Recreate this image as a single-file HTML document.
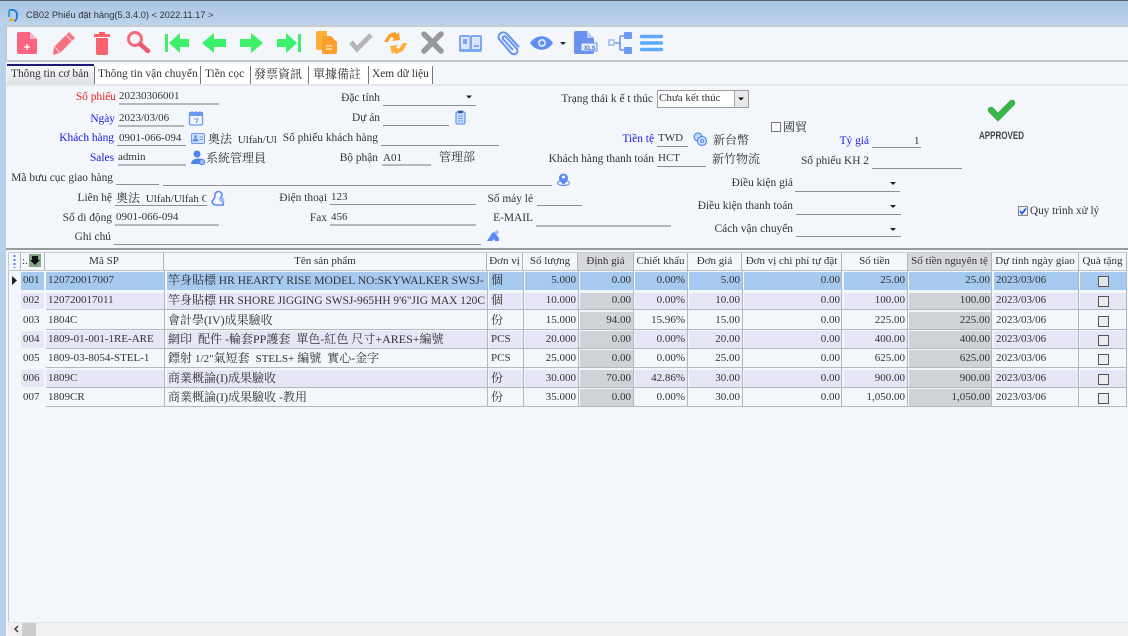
<!DOCTYPE html>
<html lang="vi"><head><meta charset="utf-8"><title>CB02 Phiếu đặt hàng</title>
<style>
*{box-sizing:border-box}
html,body{margin:0;padding:0;width:1128px;height:636px;overflow:hidden;background:#f3f6fb}
body{position:relative;font:11px "Liberation Serif","Noto Serif CJK SC",serif;color:#333}
#w{position:absolute;left:0;top:0;width:1128px;height:636px;overflow:hidden;filter:blur(.3px)}
#w div,#w span.a{position:absolute;white-space:nowrap}
.l{line-height:14px;height:14px;text-align:right;font-size:11.4px}
.t{line-height:14px;height:14px}
.f{height:1px;background:#8b9096}
.g{height:2px;background:#b4b8bc}
.c{font-size:12px}
.blue{color:#1a1ae6}
.row{left:21px;width:1106px;display:grid;grid-template-columns:25px 119px 322px 36px 55px 55px 54px 55px 100px 65px 85px 86px 49px}
#w .row>span{display:block;position:static;overflow:hidden;padding:0 2px;border-left:2px solid #f3f6fb;border-right:1px solid transparent;white-space:nowrap}
#w .row>span.n{text-align:right;padding:0 1px}
#w .row>span.i{border:0;border-right:2px solid #f3f6fb}
#w .row>span:nth-child(2){border-left:0;padding-left:2px}
#w .row>span:nth-child(3){padding-left:1px}
#w .row>span span{display:inline;border:0;padding:0}
.lv>span{background:#e6e6f7}
.bl>span{background:#a6c9ef!important}
.wh>span{background:#f3f6fb}
#w .row>span.y{background:#cfd2d6}
.lv>span.y{background:#cfd2d6!important}
#w .row>span.x{position:relative}
.x i{position:absolute;left:18px;top:4px;width:11px;height:11px;border:1px solid #555;background:#ececec;display:block}
.bl .x i{background:#e2e6ea}
.h{top:253px;height:17px;line-height:16px;text-align:center;border-right:1px solid #b0b4b8;color:#333}
.line{left:46px;width:1081px;height:1px;background:#b4b8bc}
.v{top:271px;width:1px;height:136px;background:#b4b8bc}
.tab{top:66px;height:18px;line-height:17px;font-size:11.4px}
.sep{top:66px;width:1px;height:18px;background:#777}
</style></head><body><div id="w">
<div style="left:0;top:0;width:1128px;height:1px;background:#59616c"></div>
<div style="left:0;top:1px;width:1128px;height:24px;background:linear-gradient(#a9c5e4,#bcd3ec)"></div>
<div style="left:0;top:25px;width:6px;height:611px;background:#b9d1ea"></div>
<div style="left:6px;top:25px;width:1122px;height:2px;background:#c9ccd0"></div>
<div style="left:6px;top:27px;width:1122px;height:33px;background:#f3f6fb"></div>
<div style="left:6px;top:60px;width:1122px;height:2px;background:#c3c6ca"></div>
<div style="left:6px;top:25px;width:1px;height:37px;background:#c3c6ca"></div>
<div style="left:6px;top:84px;width:1122px;height:2px;background:#e4e6e9"></div>
<div class="t" style="left:26px;top:8px;font:9.3px/14px 'Liberation Sans',sans-serif;color:#333">CB02 Phiếu đặt hàng(5.3.4.0) &lt; 2022.11.17 &gt;</div>

<div style="left:7px;top:64px;width:87px;height:20px;background:linear-gradient(#f7f8fa,#dfe1e4);border-top:2px solid #1c1c78"></div>
<div style="left:94px;top:64px;width:339px;height:20px;background:#fff"></div>
<div class="tab" style="left:11px">Thông tin cơ bản</div>
<div class="sep" style="left:94px"></div>
<div class="tab" style="left:98px">Thông tin vận chuyển</div>
<div class="sep" style="left:200px"></div>
<div class="tab" style="left:205px">Tiền cọc</div>
<div class="sep" style="left:250px"></div>
<div class="tab c" style="left:254px;font-size:12px">發票資訊</div>
<div class="sep" style="left:308px"></div>
<div class="tab c" style="left:313px;font-size:12px">單據備註</div>
<div class="sep" style="left:368px"></div>
<div class="tab" style="left:372px">Xem dữ liệu</div>
<div class="sep" style="left:432px"></div>

<div class="l" style="right:1012px;top:90px;color:#f02020">Số phiếu</div>
<div class="t" style="left:119px;top:89px">20230306001</div><div class="g" style="left:119px;top:103px;width:100px"></div>
<div class="l blue" style="right:1013px;top:112px">Ngày</div>
<div class="t" style="left:119px;top:111px">2023/03/06</div><div class="g" style="left:118px;top:125px;width:66px"></div>
<div class="l blue" style="right:1014px;top:131px">Khách hàng</div>
<div class="t" style="left:119px;top:131px">0901-066-094</div><div class="f" style="left:117px;top:145px;width:69px"></div>
<div class="t c" style="left:208px;top:132px;width:69px;overflow:hidden">奧法 <span style="font-size:11px">&nbsp;Ulfah/Ul</span></div>
<div class="l" style="right:750px;top:131px">Số phiếu khách hàng</div><div class="f" style="left:381px;top:145px;width:118px"></div>
<div class="l blue" style="right:1014px;top:151px">Sales</div>
<div class="t" style="left:118px;top:150px">admin</div><div class="g" style="left:118px;top:164px;width:68px"></div>
<div class="t c" style="left:206px;top:151px">系統管理員</div>
<div class="l" style="right:750px;top:151px">Bộ phận</div>
<div class="t" style="left:383px;top:151px">A01</div><div class="g" style="left:382px;top:164px;width:49px"></div>
<div class="t c" style="left:439px;top:150px">管理部</div>
<div class="l" style="right:1015px;top:171px">Mã bưu cục giao hàng</div><div class="f" style="left:116px;top:184px;width:43px"></div><div class="f" style="left:163px;top:185px;width:389px"></div>
<div class="l" style="right:1016px;top:191px">Liên hệ</div>
<div class="t c" style="left:116px;top:191px;width:91px;overflow:hidden">奧法 <span style="font-size:11px">&nbsp;Ulfah/Ulfah C</span></div><div class="f" style="left:115px;top:205px;width:92px"></div>
<div class="l" style="right:801px;top:191px">Điện thoại</div>
<div class="t" style="left:331px;top:190px">123</div><div class="f" style="left:330px;top:204px;width:146px"></div>
<div class="l" style="right:595px;top:192px">Số máy lẻ</div><div class="f" style="left:537px;top:205px;width:45px"></div>
<div class="l" style="right:1016px;top:211px">Số di động</div>
<div class="t" style="left:116px;top:210px">0901-066-094</div><div class="g" style="left:115px;top:224px;width:104px"></div>
<div class="l" style="right:801px;top:211px">Fax</div>
<div class="t" style="left:331px;top:210px">456</div><div class="g" style="left:330px;top:224px;width:146px"></div>
<div class="l" style="right:595px;top:211px">E-MAIL</div><div class="g" style="left:536px;top:225px;width:135px"></div>
<div class="l" style="right:1017px;top:230px">Ghi chú</div><div class="f" style="left:114px;top:244px;width:367px"></div>
<div class="l" style="right:748px;top:91px">Đặc tính</div><div class="f" style="left:383px;top:105px;width:93px"></div>
<div class="l" style="right:748px;top:111px">Dự án</div><div class="f" style="left:383px;top:125px;width:66px"></div>
<div class="l" style="right:475px;top:92px">Trạng thái k ế t thúc</div>
<div style="left:657px;top:90px;width:92px;height:18px;background:#fff;border:1px solid #9a9da0"></div>
<div class="t" style="left:659px;top:91px">Chưa kết thúc</div>
<div style="left:734px;top:91px;width:14px;height:16px;background:#e8e8e8;border-left:1px solid #aaa"></div>
<div class="l blue" style="right:474px;top:132px">Tiền tệ</div>
<div class="t" style="left:658px;top:131px">TWD</div><div class="f" style="left:657px;top:146px;width:31px"></div>
<div class="t c" style="left:713px;top:133px">新台幣</div>
<div class="l" style="right:474px;top:152px">Khách hàng thanh toán</div>
<div class="t" style="left:658px;top:151px">HCT</div><div class="f" style="left:657px;top:166px;width:49px"></div>
<div class="t c" style="left:712px;top:152px">新竹物流</div>
<div style="left:771px;top:122px;width:10px;height:10px;border:1px solid #777;background:#fff"></div>
<div class="t c" style="left:783px;top:120px">國貿</div>
<div class="l blue" style="right:259px;top:134px">Tỷ giá</div>
<div class="t" style="left:914px;top:134px">1</div><div class="f" style="left:872px;top:147px;width:49px"></div>
<div class="l" style="right:259px;top:154px">Số phiếu KH 2</div><div class="f" style="left:872px;top:168px;width:90px"></div>
<div class="l" style="right:335px;top:176px">Điều kiện giá</div><div class="f" style="left:795px;top:191px;width:105px"></div>
<div class="l" style="right:335px;top:199px">Điều kiện thanh toán</div><div class="f" style="left:796px;top:214px;width:105px"></div>
<div class="l" style="right:335px;top:222px">Cách vận chuyển</div><div class="f" style="left:796px;top:236px;width:105px"></div>
<div class="t" style="left:979px;top:129px;font:bold 11px/14px 'Liberation Sans',sans-serif;color:#444;transform:scaleX(.73);transform-origin:0 0">APPROVED</div>
<div style="left:1018px;top:206px;width:10px;height:10px;border:1px solid #888;background:#e8edf5"></div>
<div class="t" style="left:1030px;top:204px;font-size:11.2px">Quy trình xử lý</div>

<div style="left:6px;top:248px;width:1122px;height:2px;background:#999c9f"></div>
<div style="left:8px;top:252px;width:1px;height:371px;background:#c4c8cc"></div>
<div style="left:9px;top:270px;width:1118px;height:1px;background:#c0c4c8"></div>
<div style="left:9px;top:252px;width:1118px;height:1px;background:#c8ccd0"></div>
<div class="h" style="left:9px;width:12px"></div>
<div class="h" style="left:21px;width:24px;text-align:left;padding-left:1px">:.</div>
<div style="left:29px;top:254px;width:12px;height:13px;background:#86a886"></div>
<div class="h" style="left:45px;width:119px">Mã SP</div>
<div class="h" style="left:164px;width:323px">Tên sản phẩm</div>
<div class="h" style="left:487px;width:36px">Đơn vị</div>
<div class="h" style="left:523px;width:55px">Số lượng</div>
<div class="h" style="left:578px;width:56px;background:#d6d8db">Định giá</div>
<div class="h" style="left:634px;width:54px">Chiết khấu</div>
<div class="h" style="left:688px;width:54px">Đơn giá</div>
<div class="h" style="left:742px;width:100px">Đơn vị chi phí tự đặt</div>
<div class="h" style="left:842px;width:66px">Số tiền</div>
<div class="h" style="left:908px;width:84px;background:#d6d8db">Số tiền nguyên tệ</div>
<div class="h" style="left:992px;width:87px">Dự tính ngày giao</div>
<div class="h" style="left:1079px;width:48px">Quà tặng</div>

<div class="row bl" style="top:272px;height:18px;line-height:17px">
<span class="i">001</span><span>120720017007</span><span><span class="c">竿身貼標</span> <span style="font-size:11.55px">HR HEARTY RISE MODEL NO:SKYWALKER SWSJ-</span></span><span class="c">個</span><span class="n">5.000</span><span class="n">0.00</span><span class="n">0.00%</span><span class="n">5.00</span><span class="n">0.00</span><span class="n">25.00</span><span class="n">25.00</span><span>2023/03/06</span><span class="x"><i></i></span></div>
<div class="row lv" style="top:293px;height:16px;line-height:14px">
<span class="i">002</span><span>120720017011</span><span><span class="c">竿身貼標</span> <span style="font-size:11.4px">HR SHORE JIGGING SWSJ-965HH 9'6"JIG MAX 120C</span></span><span class="c">個</span><span class="n">10.000</span><span class="n y">0.00</span><span class="n">0.00%</span><span class="n">10.00</span><span class="n">0.00</span><span class="n">100.00</span><span class="n y">100.00</span><span>2023/03/06</span><span class="x"><i style="top:3px"></i></span></div>
<div class="row wh" style="top:312px;height:17px;line-height:16px">
<span class="i">003</span><span>1804C</span><span class="c">會計學(IV)成果驗收</span><span class="c">份</span><span class="n">15.000</span><span class="n y">94.00</span><span class="n">15.96%</span><span class="n">15.00</span><span class="n">0.00</span><span class="n">225.00</span><span class="n y">225.00</span><span>2023/03/06</span><span class="x"><i></i></span></div>
<div class="row lv" style="top:331px;height:17px;line-height:16px">
<span class="i">004</span><span>1809-01-001-1RE-ARE</span><span class="c">網印&nbsp; 配件 -輪套PP護套&nbsp; 單色-紅色 尺寸+ARES+編號</span><span>PCS</span><span class="n">20.000</span><span class="n y">0.00</span><span class="n">0.00%</span><span class="n">20.00</span><span class="n">0.00</span><span class="n">400.00</span><span class="n y">400.00</span><span>2023/03/06</span><span class="x"><i></i></span></div>
<div class="row wh" style="top:350px;height:17px;line-height:17px">
<span class="i">005</span><span>1809-03-8054-STEL-1</span><span class="c">鏢射 <span style="font-size:11px">1/2"</span>氣短套&nbsp; <span style="font-size:11px">STELS+</span> 編號&nbsp; 實心-金字</span><span>PCS</span><span class="n">25.000</span><span class="n y">0.00</span><span class="n">0.00%</span><span class="n">25.00</span><span class="n">0.00</span><span class="n">625.00</span><span class="n y">625.00</span><span>2023/03/06</span><span class="x"><i></i></span></div>
<div class="row lv" style="top:370px;height:17px;line-height:16px">
<span class="i">006</span><span>1809C</span><span class="c">商業概論(I)成果驗收</span><span class="c">份</span><span class="n">30.000</span><span class="n y">70.00</span><span class="n">42.86%</span><span class="n">30.00</span><span class="n">0.00</span><span class="n">900.00</span><span class="n y">900.00</span><span>2023/03/06</span><span class="x"><i></i></span></div>
<div class="row wh" style="top:389px;height:17px;line-height:17px">
<span class="i">007</span><span>1809CR</span><span class="c">商業概論(I)成果驗收 -教用</span><span class="c">份</span><span class="n">35.000</span><span class="n y">0.00</span><span class="n">0.00%</span><span class="n">30.00</span><span class="n">0.00</span><span class="n">1,050.00</span><span class="n y">1,050.00</span><span>2023/03/06</span><span class="x"><i></i></span></div>
<div class="line" style="top:309px"></div><div class="line" style="top:329px"></div><div class="line" style="top:348px"></div><div class="line" style="top:367px"></div><div class="line" style="top:387px"></div><div class="line" style="top:406px"></div>
<div class="v" style="left:164px"></div><div class="v" style="left:487px"></div><div class="v" style="left:523px"></div><div class="v" style="left:578px"></div><div class="v" style="left:633px"></div><div class="v" style="left:687px"></div><div class="v" style="left:742px"></div><div class="v" style="left:841px"></div><div class="v" style="left:907px"></div><div class="v" style="left:991px"></div><div class="v" style="left:1078px"></div><div class="v" style="left:1126px"></div>

<div style="left:8px;top:622px;width:1120px;height:1px;background:#e2e4e7"></div>
<div style="left:8px;top:623px;width:1120px;height:13px;background:#f0f0f0"></div>
<div style="left:22px;top:623px;width:14px;height:13px;background:#cdcdcd"></div>

<svg style="position:absolute;left:0;top:0" width="1128" height="636" viewBox="0 0 1128 636">
<!-- logo -->
<path d="M9 10h4a4.500 4.500 0 0 1 4 5v2a4 4 0 0 1-3 4" fill="none" stroke="#2a7fd0" stroke-width="2"/>
<path d="M9 10v7" stroke="#39a9c9" stroke-width="2"/>
<path d="M8 21l4-3 3 3z" fill="#f2b021"/>
<!-- new -->
<path d="M19 32h11l7 7v13a2 2 0 0 1-2 2H19a2 2 0 0 1-2-2V34a2 2 0 0 1 2-2z" fill="#fa6480"/>
<path d="M30 32v7h7z" fill="#fdb4c0"/>
<path d="M24 47h6M27 44v6" stroke="#fff" stroke-width="1.300"/>
<!-- pencil -->
<path d="M69 32l6 6-15 15-7 2 1-8z" fill="#f7707e"/>
<path d="M66 35l6 6M55 47l5 6" stroke="#fdd8dc" stroke-width="1"/>
<!-- trash -->
<path d="M94 34h5v-2h6v2h5v3H94z" fill="#f9626e"/>
<path d="M96 38h12v15a2 2 0 0 1-2 2h-8a2 2 0 0 1-2-2z" fill="#f9626e"/>
<!-- search -->
<circle cx="135" cy="39" r="6.500" fill="none" stroke="#f96a78" stroke-width="3"/>
<path d="M140 44l8 7" stroke="#f05a6e" stroke-width="4.500" stroke-linecap="round"/>
<!-- nav -->
<g fill="#3cf06a">
<path d="M165 34h3v18h-3zM169 43l11-10v6h9v8h-9v6z"/>
<path d="M202 43l12-10v6h12v8h-12v6z"/>
<path d="M263 43l-12-10v6h-11v8h11v6z"/>
<path d="M298 34h3v18h-3zM297 43l-11-10v6h-9v8h9v6z"/>
</g>
<!-- copy -->
<path d="M316 33a2 2 0 0 1 2-2h9v19h-9a2 2 0 0 1-2-2z" fill="#fdb035"/>
<path d="M322 36h9l6 6v10a2 2 0 0 1-2 2h-13z" fill="#fc9f2a"/>
<path d="M326 46h6M326 49h6" stroke="#fff" stroke-width="1"/>
<!-- check -->
<path d="M351 42l6 7 14-14" fill="none" stroke="#b6b6b6" stroke-width="5"/>
<!-- swap -->
<path d="M384 42l5-8 6-2 2 2 2-2 1 8-8 1 2-3-3-1-3 5z" fill="#fa9f2e"/>
<path d="M407 43l-4 8-7 3-2-2-2 2-2-8 8-1-2 3 3 1 4-6z" fill="#fcae34"/>
<!-- x -->
<path d="M424 34l17 17M441 34l-17 17" stroke="#999" stroke-width="5.500" stroke-linecap="round"/>
<!-- book -->
<path d="M459 37a2 2 0 0 1 2-2h8l1.500 1 1.500-1h8a2 2 0 0 1 2 2v13a2 2 0 0 1-2 2h-19a2 2 0 0 1-2-2z" fill="#7da7f4"/>
<path d="M461 37h8.500v12h-8.500zM472 37h8v12h-8z" fill="#dbe7fc"/>
<path d="M463 39h4v5h-4zM474 45h5v2h-5z" fill="#7da7f4"/>
<!-- clip -->
<path d="M519 47L507 34C503 30 497 34 499 39L511 53C514 56 519 53 517 49L506 37C504 35 502 37 503 39L513 50" fill="none" stroke="#6394f2" stroke-width="2"/>
<!-- eye -->
<path d="M530 43c6-9 17-9 23 0-6 9-17 9-23 0z" fill="#5e8ff0"/>
<circle cx="542" cy="43" r="4" fill="#d9e6fc"/><circle cx="542" cy="43" r="2.200" fill="#5e8ff0"/>
<path d="M560 42h6l-3 3z" fill="#222"/>
<!-- xls -->
<path d="M574 33a2 2 0 0 1 2-2h11l7 7v14a2 2 0 0 1-2 2h-16a2 2 0 0 1-2-2z" fill="#6a90f0"/>
<path d="M587 31v7h7z" fill="#b9cdf8"/>
<rect x="581" y="43" width="16" height="8" fill="#e7eefc" stroke="#6a90f0"/>
<text x="584" y="50" font-family="Liberation Sans" font-size="6" font-weight="bold" fill="#4a70d0">XLS</text>
<!-- tree -->
<rect x="608" y="39" width="7" height="7" fill="#b0c8f6"/><circle cx="611.500" cy="42.500" r="1.600" fill="#fff"/>
<rect x="624" y="32" width="8" height="7" rx="1" fill="#6a9af2"/><rect x="624" y="47" width="8" height="7" rx="1" fill="#6a9af2"/>
<path d="M615 43h5M620 36v14M620 36h4M620 50h4" stroke="#6a9af2" stroke-width="1.600" fill="none"/>
<!-- menu -->
<path d="M641.500 36.500h20M641.500 43h20M641.500 49.500h20" stroke="#5ea9fa" stroke-width="3.400" stroke-linecap="round"/>
<!-- form icons -->
<rect x="189.500" y="113" width="13" height="12" rx="1.500" fill="#f3f6fb" stroke="#6a9af2" stroke-width="1.300"/>
<rect x="189" y="112" width="14" height="4" fill="#6a9af2"/>
<path d="M192 111v2M196 111v2M200 111v2M194 119h4l-2 4" stroke="#6a9af2" fill="none"/>
<rect x="191.500" y="133.500" width="13" height="10" rx="1.500" fill="#cfe0fb" stroke="#6a9af2"/>
<path d="M193 141c0-3 5-3 5 0zM199.500 137h3.500M199.500 139.500h3.500" fill="#5a8af0" stroke="#5a8af0" stroke-width=".8"/>
<circle cx="195.500" cy="136.500" r="1.400" fill="#5a8af0"/>
<circle cx="197" cy="154" r="3.500" fill="#4f86ea"/><path d="M191 164c0-6 10-7 12-4l-2 4z" fill="#4f86ea"/><circle cx="202" cy="162" r="2.700" fill="#9ebff5" stroke="#4f86ea"/>
<path d="M215 195a3.500 3.500 0 1 1 7 0c0 2-2 3-2 4 3 1 4 3 3 6h-7c-3 0-5-3-3-5 1-1 2-3 2-5z" fill="none" stroke="#5a8af0" stroke-width="1.600"/><circle cx="222" cy="200" r="2.500" fill="#9ebff5"/>
<path d="M559 178a4.500 4.500 0 1 1 9 0c0 3-3 5-4.500 7-1.500-2-4.500-4-4.500-7z" fill="#5a8af0"/><circle cx="563.500" cy="177" r="1.500" fill="#fff"/>
<ellipse cx="563.500" cy="183" rx="6" ry="2.500" fill="none" stroke="#5a8af0"/>
<path d="M487 241l5-8 2-1 5 6v3h-4l-1-2-2 2z" fill="#5a8af0"/><path d="M494 232l3-2 2 2-2 3z" fill="#9ebff5"/>
<rect x="456" y="112" width="9" height="12" rx="1.500" fill="#cfe0fb" stroke="#6a9af2" stroke-width="1.300"/><path d="M458 111h5v2h-5zM458 116h5M458 118.500h5M458 121h5" stroke="#6a9af2"/>
<circle cx="698" cy="137" r="4" fill="#c5d8fa" stroke="#5a8af0" stroke-width="1.200"/><circle cx="702" cy="141" r="4.500" fill="#cfe0fb" stroke="#5a8af0" stroke-width="1.200"/><circle cx="702" cy="141" r="1.500" fill="none" stroke="#5a8af0"/>
<path d="M466 95.500h6l-3 3zM890 182h6l-3 3zM890 205h6l-3 3zM890 228h6l-3 3z" fill="#222"/>
<path d="M738 97.500h6l-3 3z" fill="#111"/>
<!-- approved check -->
<path d="M991 110l7 7 14-14" fill="none" stroke="#3ab54a" stroke-width="6.500" stroke-linecap="round"/>
<!-- tick -->
<path d="M1020 211l2 2.500 4-5" fill="none" stroke="#1f5fe0" stroke-width="1.800"/>
<!-- grid icons -->
<path d="M14.500 255v13" stroke="#4a8af0" stroke-width="2" stroke-dasharray="2 2"/>
<path d="M32 256h6v4h2l-5 5-5-5h2z" fill="#111"/>
<path d="M12 276l5 4.500-5 4.500z" fill="#222"/>
<!-- scroll arrow -->
<path d="M18 626l-3 3 3 3" fill="none" stroke="#444" stroke-width="1.500"/>
</svg>
</div></body></html>
